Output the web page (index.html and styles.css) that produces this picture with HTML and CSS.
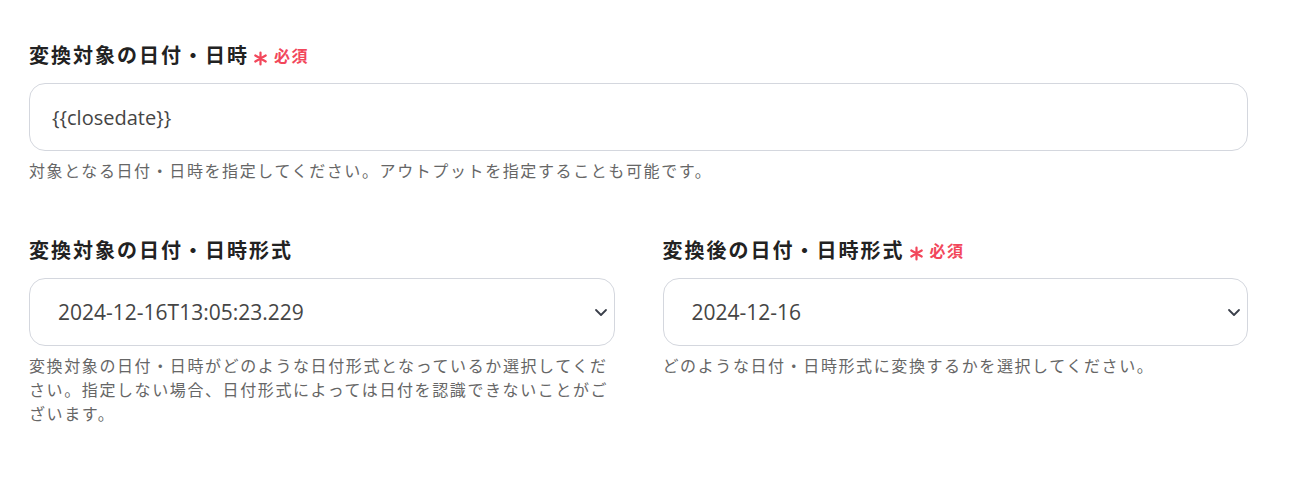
FILE: index.html
```html
<!DOCTYPE html>
<html lang="ja">
<head>
<meta charset="utf-8">
<link rel="stylesheet" href="styles.css">
</head>
<body>
<div class="form">
  <div class="field">
    <div class="label">変換対象の日付・日時<span class="req"><svg class="ast" width="15" height="15" viewBox="0 0 15 15"><path d="M7.5 1.5v12M2.3 4.5l10.4 6M2.3 10.5l10.4-6" stroke="#f2475b" stroke-width="2.2" stroke-linecap="round"/></svg>必須</span></div>
    <div class="input">{{closedate}}</div>
    <div class="help">対象となる日付・日時を指定してください。アウトプットを指定することも可能です。</div>
  </div>
  <div class="row">
    <div class="field">
      <div class="label">変換対象の日付・日時形式</div>
      <div class="select">
        <span class="value">2024-12-16T13:05:23.229</span>
        <svg class="chev" width="14" height="9" viewBox="0 0 14 9"><path d="M2 2l5 5 5-5" fill="none" stroke="#3a3f4a" stroke-width="1.8" stroke-linecap="round" stroke-linejoin="round"/></svg>
      </div>
      <div class="help">変換対象の日付・日時がどのような日付形式となっているか選択してください。指定しない場合、日付形式によっては日付を認識できないことがございます。</div>
    </div>
    <div class="field">
      <div class="label">変換後の日付・日時形式<span class="req"><svg class="ast" width="15" height="15" viewBox="0 0 15 15"><path d="M7.5 1.5v12M2.3 4.5l10.4 6M2.3 10.5l10.4-6" stroke="#f2475b" stroke-width="2.2" stroke-linecap="round"/></svg>必須</span></div>
      <div class="select">
        <span class="value">2024-12-16</span>
        <svg class="chev" width="14" height="9" viewBox="0 0 14 9"><path d="M2 2l5 5 5-5" fill="none" stroke="#3a3f4a" stroke-width="1.8" stroke-linecap="round" stroke-linejoin="round"/></svg>
      </div>
      <div class="help">どのような日付・日時形式に変換するかを選択してください。</div>
    </div>
  </div>
</div>
</body>
</html>
```
FILE: styles.css
```css
html, body {
  margin: 0;
  padding: 0;
  background: #ffffff;
}
body {
  font-family: "Noto Sans", "Noto Sans CJK JP", sans-serif;
  color: #222222;
}
.form {
  width: 1219px;
  margin-left: 29px;
  padding-top: 41px;
}
.row {
  display: grid;
  grid-template-columns: 1fr 1fr;
  column-gap: 48px;
  margin-top: 54px;
}
.label {
  font-family: "Noto Sans CJK JP", sans-serif;
  font-weight: 700;
  font-size: 20px;
  letter-spacing: 0.1em;
  line-height: 28px;
  height: 28px;
  color: #222222;
  display: flex;
  align-items: center;
}
.req {
  display: inline-flex;
  align-items: center;
  color: #f2475b;
  font-size: 16px;
  letter-spacing: 0.1em;
  margin-left: 4px;
}
.ast {
  margin-right: 6px;
  transform: translateY(3px);
}
.input, .select {
  box-sizing: border-box;
  height: 68px;
  margin-top: 14px;
  border: 1px solid #d4d7de;
  border-radius: 16px;
  display: flex;
  align-items: center;
  color: #454545;
  font-family: "Open Sans", "Noto Sans CJK JP", sans-serif;
}
.input {
  padding-left: 22px;
  font-size: 20px;
}
.select {
  position: relative;
  padding-left: 28px;
  font-size: 21px;
}
.chev {
  position: absolute;
  right: 6px;
  top: 29px;
}
.help {
  margin-top: 7px;
  font-family: "Noto Sans CJK JP", sans-serif;
  font-size: 16px;
  letter-spacing: 0.1em;
  line-height: 24px;
  color: #666666;
}
```
